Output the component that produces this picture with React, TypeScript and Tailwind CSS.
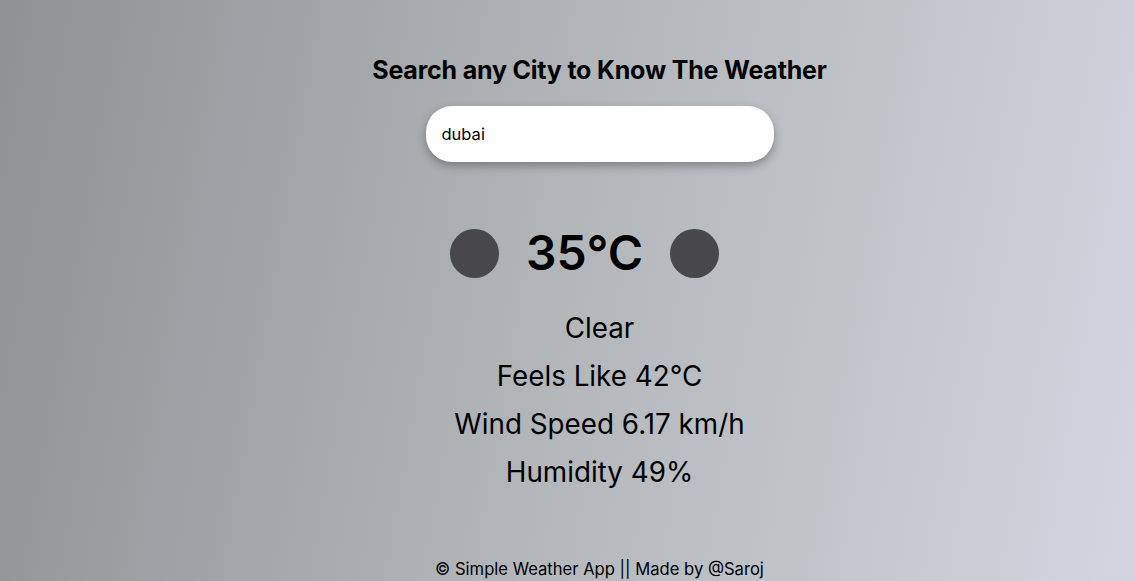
export default function App() {
  const details = ['Clear', 'Feels Like 42°C', 'Wind Speed 6.17 km/h', 'Humidity 49%'];

  return (
    <div
      className="flex min-h-[581px] w-full flex-col items-center bg-[linear-gradient(100deg,#8d9292_0%,#b3b7ba_50%,#d2d6de_100%)] pl-[64px] text-black"
      style={{ fontFamily: 'Inter, "Open Sans", sans-serif' }}
    >
      <h1 className="mt-[52px] text-[25px] leading-[36px] font-bold tracking-[-0.2px]">
        Search any City to Know The Weather
      </h1>

      <div className="mt-[18px] flex h-[56px] w-[348px] items-center rounded-[26px] bg-white px-4 shadow-[0_4px_10px_rgba(0,0,0,0.3)]">
        <input
          className="w-full bg-transparent text-[16.5px] outline-none"
          defaultValue="dubai"
        />
      </div>

      {/* temperature row */}
      <div className="mt-[59px] mr-[30px] flex h-[64px] items-center gap-[27px]">
        <div className="h-[49px] w-[49px] rounded-full bg-[#48474a]" />
        <span className="text-[48px] font-semibold leading-none">35°C</span>
        <div className="h-[49px] w-[49px] rounded-full bg-[#48474a]" />
      </div>

      <div className="mt-[19px] flex flex-col items-center">
        {details.map((d) => (
          <p key={d} className="text-[27.8px] leading-[48px]">
            {d}
          </p>
        ))}
      </div>

      <footer className="mt-auto text-[16.6px] leading-[24px]">
        © Simple Weather App || Made by @Saroj
      </footer>
    </div>
  );
}
